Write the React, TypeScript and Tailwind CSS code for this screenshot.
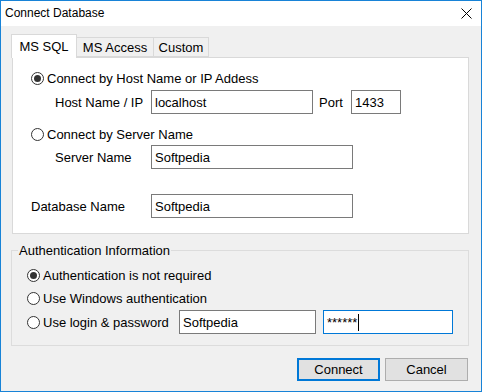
const Radio = ({ checked }: { checked?: boolean }) => (
  <span className="w-[13px] h-[13px] rounded-full border border-[#333333] bg-white flex items-center justify-center shrink-0">
    {checked && <span className="w-[7px] h-[7px] rounded-full bg-[#333333]" />}
  </span>
);

const TextBox = ({
  value,
  width,
  focused,
}: {
  value: string;
  width: string;
  focused?: boolean;
}) => (
  <div
    className={`${width} h-[24px] bg-white border flex items-center pl-[3px] ${
      focused ? "border-[#0078d7]" : "border-[#7a7a7a]"
    }`}
  >
    <span>{value}</span>
    {focused && <span className="w-px h-[17px] bg-black ml-[1px]" />}
  </div>
);

const App = () => {
  return (
    <div
      className="w-[482px] h-[392px] border border-[#1883d7] bg-[#f0f0f0] flex flex-col text-[13px] text-black leading-[15px]"
      style={{ fontFamily: '"Liberation Sans", Arial, sans-serif' }}
    >
      {/* title bar */}
      <div className="h-[25px] bg-white flex items-center justify-between pl-[4px] pr-[9px] shrink-0">
        <span className="text-[12px]">Connect Database</span>
        <svg width="11" height="11" viewBox="0 0 11 11">
          <path d="M0.5 0.5 L10.5 10.5 M10.5 0.5 L0.5 10.5" stroke="#000" strokeWidth="1" />
        </svg>
      </div>

      <div className="flex flex-col pl-[10px] pr-[12px] pt-[8px]">
        {/* tabs */}
        <div className="flex items-end h-[23px] relative z-10">
          <div className="w-[66px] h-[24px] -mb-px bg-white border border-b-0 border-[#d9d9d9] flex items-center justify-center pb-[1px]">
            MS SQL
          </div>
          <div className="w-[77px] h-[20px] border border-l-0 border-[#d9d9d9] flex items-center justify-center pt-[1px]">
            MS Access
          </div>
          <div className="w-[55px] h-[20px] border border-l-0 border-[#d9d9d9] flex items-center justify-center pt-[1px]">
            Custom
          </div>
        </div>

        {/* tab panel */}
        <div className="ml-[1px] bg-white border border-[#d9d9d9] flex flex-col pb-[15px]">
          <div className="h-[20px] mt-[10px] pl-[18px] flex items-center">
            <Radio checked />
            <span className="ml-[3px]">Connect by Host Name or IP Addess</span>
          </div>
          <div className="h-[24px] mt-[2px] flex items-center">
            <span className="w-[138px] pl-[42px] shrink-0">Host Name / IP</span>
            <TextBox value="localhost" width="w-[162px]" />
            <span className="ml-[6px] w-[32px]">Port</span>
            <TextBox value="1433" width="w-[50px]" />
          </div>
          <div className="h-[20px] mt-[10px] pl-[18px] flex items-center">
            <Radio />
            <span className="ml-[3px]">Connect by Server Name</span>
          </div>
          <div className="h-[24px] mt-[1px] flex items-center">
            <span className="w-[138px] pl-[42px] shrink-0">Server Name</span>
            <TextBox value="Softpedia" width="w-[202px]" />
          </div>
          <div className="h-[24px] mt-[25px] flex items-center">
            <span className="w-[138px] pl-[18px] shrink-0">Database Name</span>
            <TextBox value="Softpedia" width="w-[202px]" />
          </div>
        </div>

        {/* authentication group */}
        <fieldset className="mt-[9px] border border-[#dcdcdc] pl-[6px] pb-[11px] flex flex-col">
          <legend className="px-[1px] leading-[15px]">Authentication Information</legend>
          <div className="h-[20px] mt-[7px] pl-[9px] flex items-center">
            <Radio checked />
            <span className="ml-[3px]">Authentication is not required</span>
          </div>
          <div className="h-[20px] mt-[3px] pl-[9px] flex items-center">
            <Radio />
            <span className="ml-[3px]">Use Windows authentication</span>
          </div>
          <div className="h-[24px] mt-[2px] pl-[9px] flex items-center">
            <Radio />
            <span className="ml-[3px] w-[136px] shrink-0">Use login &amp; password</span>
            <TextBox value="Softpedia" width="w-[137px]" />
            <div className="ml-[7px]">
              <TextBox value="******" width="w-[130px]" focused />
            </div>
          </div>
        </fieldset>

        {/* buttons */}
        <div className="flex justify-end gap-[5px] mt-[12px] pr-px">
          <button className="w-[83px] h-[23px] bg-[#e1e1e1] border-2 border-[#0078d7] flex items-center justify-center">
            Connect
          </button>
          <button className="w-[83px] h-[23px] bg-[#e1e1e1] border border-[#adadad] flex items-center justify-center">
            Cancel
          </button>
        </div>
      </div>
    </div>
  );
};

export default App;
